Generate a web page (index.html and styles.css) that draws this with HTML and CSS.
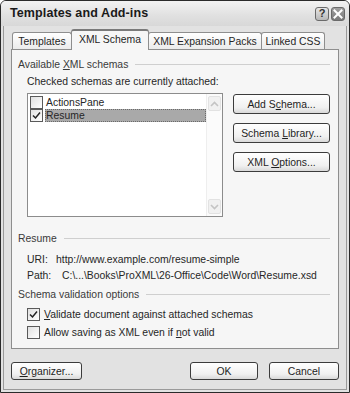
FILE: index.html
```html
<!DOCTYPE html>
<html>
<head>
<meta charset="utf-8">
<link rel="stylesheet" href="styles.css">
</head>
<body>
<div class="window">
  <div class="titlebar">
    <span class="title">Templates and Add-ins</span>
    <div class="tb-buttons">
      <span class="tb-btn help">?</span>
      <span class="tb-btn close"><svg width="10" height="10" viewBox="0 0 10 10"><path d="M1.5 1.5 L8.5 8.5 M8.5 1.5 L1.5 8.5" stroke="#fff" stroke-width="2" stroke-linecap="square"/></svg></span>
    </div>
  </div>
  <div class="client">
    <div class="tabs">
      <div class="tab tab-templates"><span>Templates</span></div>
      <div class="tab tab-schema active"><span>XML Schema</span></div>
      <div class="tab tab-packs"><span>XML Expansion Packs</span></div>
      <div class="tab tab-css"><span>Linked CSS</span></div>
    </div>
    <div class="panel">
      <div class="group-label"><span>Available <u>X</u>ML schemas</span><span class="rule"></span></div>
      <div class="schemas">
        <div class="schemas-left">
          <div class="caption">Checked schemas are currently attached:</div>
          <div class="listbox">
            <div class="items">
              <div class="item"><span class="cb"></span><span class="lbl">ActionsPane</span></div>
              <div class="item sel"><span class="cb"><svg width="9" height="9" viewBox="0 0 9 9"><path d="M1 4.5 L3.5 7 L8 1.5" fill="none" stroke="#222" stroke-width="1.5"/></svg></span><span class="lbl">Resume</span></div>
            </div>
            <div class="scrollbar">
              <div class="sb-btn"><svg width="9" height="6" viewBox="0 0 9 6"><path d="M1 5 L4.5 1.5 L8 5" fill="none" stroke="#c4c4c4" stroke-width="1.6"/></svg></div>
              <div class="sb-track"></div>
              <div class="sb-btn"><svg width="9" height="6" viewBox="0 0 9 6"><path d="M1 1 L4.5 4.5 L8 1" fill="none" stroke="#c4c4c4" stroke-width="1.6"/></svg></div>
            </div>
          </div>
        </div>
        <div class="side-buttons">
          <div class="btn side"><span>Add S<u>c</u>hema...</span></div>
          <div class="btn side"><span>Schema <u>L</u>ibrary...</span></div>
          <div class="btn side"><span>XML <u>O</u>ptions...</span></div>
        </div>
      </div>
      <div class="group-label resume-label"><span>Resume</span><span class="rule"></span></div>
      <div class="info">
        <div class="info-row"><span class="key key-uri">URI:</span><span>http://www.example.com/resume-simple</span></div>
        <div class="info-row"><span class="key key-path">Path:</span><span>C:\...\Books\ProXML\26-Office\Code\Word\Resume.xsd</span></div>
      </div>
      <div class="group-label valid-label"><span>Schema validation options</span><span class="rule"></span></div>
      <div class="options">
        <div class="option"><span class="cb"><svg width="9" height="9" viewBox="0 0 9 9"><path d="M1 4.5 L3.5 7 L8 1.5" fill="none" stroke="#222" stroke-width="1.5"/></svg></span><span><u>V</u>alidate document against attached schemas</span></div>
        <div class="option"><span class="cb"></span><span>Allow saving as XML even if <u>n</u>ot valid</span></div>
      </div>
    </div>
    <div class="footer">
      <div class="btn organizer"><span><u>O</u>rganizer...</span></div>
      <div class="footer-right">
        <div class="btn ok"><span>OK</span></div>
        <div class="btn cancel"><span>Cancel</span></div>
      </div>
    </div>
  </div>
</div>
</body>
</html>
```
FILE: styles.css
```css
* { box-sizing: border-box; }
html, body { margin: 0; padding: 0; background: #ffffff; }
body {
  font-family: "Liberation Sans", Arial, sans-serif;
  font-size: 10.4px;
  line-height: 13px;
  color: #262626;
}
u { text-decoration: underline; text-underline-offset: 1px; }

.window {
  width: 350px;
  height: 393px;
  border: 1px solid #2a2a2a;
  border-radius: 6px 6px 0 0;
  background: #e2e2e2;
  display: flex;
  flex-direction: column;
  overflow: hidden;
  white-space: nowrap;
}

.titlebar {
  height: 25px;
  flex: none;
  display: flex;
  align-items: center;
  justify-content: space-between;
  padding: 0 4px 0 9px;
  background: linear-gradient(#f2f2f2, #e0e0e0 60%, #d8d8d8);
}
.title {
  font-weight: bold;
  font-size: 12.5px;
  color: #1a1a1a;
  letter-spacing: 0.1px;
}
.tb-buttons { display: flex; gap: 2px; }
.tb-btn {
  width: 14px;
  height: 14px;
  border: 1px solid #6a6a6a;
  border-radius: 3px;
  display: flex;
  align-items: center;
  justify-content: center;
  font-weight: bold;
  font-size: 11px;
}
.help { background: linear-gradient(#e6e6e6, #b8b8b8); color: #333; }
.close { background: linear-gradient(#a0a0a0, #7a7a7a); }

.client {
  flex: 1;
  display: flex;
  flex-direction: column;
  border-left: 1px solid #9a9a9a;
  border-right: 1px solid #9a9a9a;
  border-bottom: 1px solid #9a9a9a;
  margin: 0 2px 2px 2px;
  padding: 0 7px 0 7px;
}

.tabs {
  height: 23px;
  flex: none;
  display: flex;
  align-items: flex-end;
  padding-left: 1px;
  position: relative;
  z-index: 1;
}
.tab {
  height: 17px;
  border: 1px solid #8e8e8e;
  border-bottom: none;
  border-radius: 3px 3px 0 0;
  background: linear-gradient(#ffffff, #ebebeb);
  display: flex;
  align-items: center;
  justify-content: center;
  margin-left: -1px;
  padding-top: 1px;
}
.tab.active {
  height: 21px;
  margin-bottom: -1px;
  background: #f6f6f6;
  border-top: 2px solid #7a7a7a;
  padding-top: 0;
  padding-bottom: 2px;
}
.tab-templates { width: 60px; margin-left: 0; }
.tab-schema { width: 78px; }
.tab-packs { width: 114px; }
.tab-css { width: 64px; }

.panel {
  height: 300px;
  flex: none;
  border: 1px solid #8e8e8e;
  background: #f6f6f6;
  padding: 8px 8px 0 6px;
  display: flex;
  flex-direction: column;
}

.group-label {
  display: flex;
  align-items: center;
  color: #3a3a3a;
}
.rule {
  flex: 1;
  height: 1px;
  background: #cfcfcf;
  margin-left: 7px;
}

.schemas {
  display: flex;
  margin-top: 4px;
  padding-left: 9px;
}
.schemas-left { width: 196px; flex: none; }
.caption { margin-bottom: 5px; }
.listbox {
  height: 124px;
  border: 1px solid #8c8c8c;
  background: #ffffff;
  display: flex;
}
.items {
  flex: 1;
  padding: 2px 0 0 2px;
}
.item {
  height: 13px;
  display: flex;
  align-items: center;
}
.item .cb { margin-right: 2px; }
.item .lbl { flex: 1; height: 13px; padding-left: 1px; }
.item.sel .lbl { background: #a9a9a9; outline: 1px dotted #6a6a6a; outline-offset: -1px; }

.cb {
  width: 13px;
  height: 13px;
  flex: none;
  border: 1px solid #5a5a5a;
  background: linear-gradient(135deg, #e0e0e0, #ffffff);
  display: flex;
  align-items: center;
  justify-content: center;
}

.scrollbar {
  width: 16px;
  flex: none;
  display: flex;
  flex-direction: column;
  background: #fbfbfb;
  border-left: 1px solid #eeeeee;
  padding: 2px 1px 2px 1px;
}
.sb-btn {
  height: 15px;
  border: 1px solid #e2e2e2;
  border-radius: 2px;
  background: #f1f1f1;
  display: flex;
  align-items: center;
  justify-content: center;
}
.sb-track { flex: 1; }

.side-buttons {
  flex: 1;
  display: flex;
  flex-direction: column;
  gap: 9px;
  padding: 19px 0 0 10px;
}

.btn {
  height: 20px;
  border: 1px solid #3c3c3c;
  border-radius: 3px;
  background: linear-gradient(#ffffff, #f0f0f0 70%, #d9d9d9);
  display: flex;
  align-items: center;
  justify-content: center;
  color: #1e1e1e;
}

.resume-label { margin-top: 15px; }
.info { padding-left: 9px; margin-top: 6px; }
.info-row { height: 16px; display: flex; align-items: center; }
.key-uri { width: 29px; }
.key-path { width: 35px; }

.valid-label { margin-top: 5px; }
.options { padding-left: 9px; margin-top: 7px; display: flex; flex-direction: column; gap: 5px; }
.option { display: flex; align-items: center; height: 13px; }
.option .cb { margin-right: 4px; }

.footer {
  display: flex;
  justify-content: space-between;
  margin-top: 13px;
}
.footer .btn { height: 18px; }
.organizer { width: 71px; }
.footer-right { display: flex; gap: 11px; }
.ok { width: 68px; }
.cancel { width: 70px; }
```
